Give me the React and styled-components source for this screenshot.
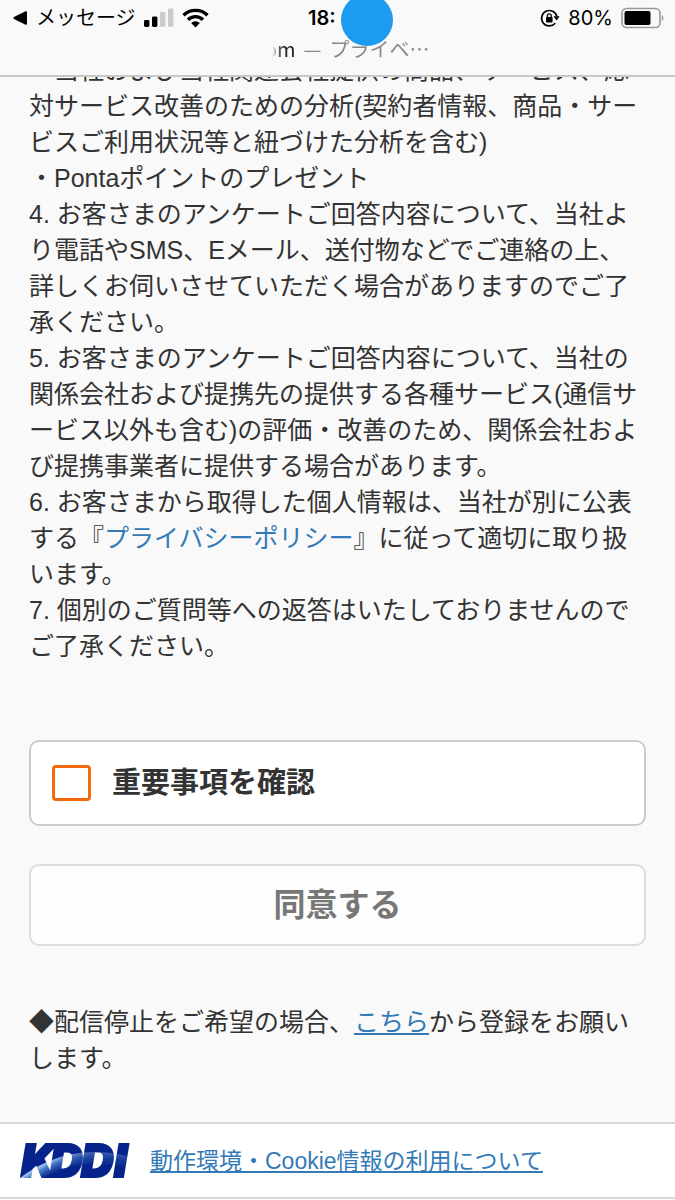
import styled, { createGlobalStyle } from "styled-components";

const GlobalStyle = createGlobalStyle`
  * {
    box-sizing: border-box;
  }

  body {
    margin: 0;
    background: #f9f9f9;
    color: #333;
    font-family: "Liberation Sans", "Noto Sans CJK JP", sans-serif;
    font-size: 25px;
    line-height: 36px;
  }
`;

// Browser chrome

const Header = styled.header`
  position: sticky;
  top: 0;
  z-index: 1;
  height: 77px;
  background: #f9f9f9;
  border-bottom: 2px solid #c8c8c8;
  font-family: Inter, "Noto Sans CJK JP", sans-serif;
  font-size: 20px;
`;

const StatusBar = styled.div`
  display: grid;
  grid-template-columns: 1fr auto 1fr;
  padding: 0 11px 0 12px;
  color: #000;
`;

const StatusGroup = styled.div`
  display: flex;
  align-items: center;
  justify-content: ${(props) => (props.$end ? "flex-end" : "flex-start")};
  gap: 8px;
`;

const BackLink = styled.a`
  display: flex;
  align-items: center;
  gap: 8px;
  color: inherit;
  text-decoration: none;
`;

const Clock = styled.div`
  position: relative;
  width: 60px;
  font-weight: 600;
`;

const Dot = styled.span`
  position: absolute;
  top: -6px;
  left: 33px;
  z-index: 1;
  width: 52px;
  height: 52px;
  border-radius: 50%;
  background: #1d9bf0;
`;

const AddressRow = styled.div`
  display: flex;
  justify-content: center;
  padding-left: 24px;
`;

const AddressBar = styled.div`
  display: flex;
  justify-content: flex-end;
  gap: 8px;
  width: 160px;
  color: #888;
  font-family: "Noto Sans CJK JP", sans-serif;
  line-height: 26px;
  white-space: nowrap;
  mask-image: linear-gradient(to right, transparent 2px, #000 12px);
`;

const Host = styled.span`
  color: #222;
`;

// Page

const Main = styled.main`
  margin-top: -25px;
  padding: 0 29px 46px;
`;

const Paragraph = styled.p`
  margin: 0;
  line-break: normal;
`;

const Link = styled.a`
  color: #337ab7;
  text-decoration: ${(props) => (props.$plain ? "none" : "underline")};
  text-decoration-thickness: 2px;
  text-decoration-skip-ink: none;
  text-underline-offset: 2px;
`;

const ConfirmBox = styled.label`
  display: flex;
  align-items: center;
  gap: 21px;
  height: 86px;
  margin-top: 76px;
  padding: 0 21px;
  background: #fff;
  border: 2px solid #ccc;
  border-radius: 10px;
  font-size: 29px;
  font-weight: 700;
`;

const Checkbox = styled.input`
  appearance: none;
  width: 39px;
  height: 36px;
  margin: 0;
  background: #fff;
  border: 3px solid #f26a0c;
  border-radius: 4px;

  &:checked {
    background: #f26a0c;
  }
`;

const SubmitButton = styled.button`
  display: block;
  width: 100%;
  height: 82px;
  margin: 38px 0 58px;
  background: #fdfdfd;
  border: 2px solid #ddd;
  border-radius: 10px;
  color: #777;
  font: inherit;
  font-size: 32px;
  font-weight: 700;
`;

const Footer = styled.footer`
  display: flex;
  align-items: center;
  gap: 20px;
  height: 77px;
  padding: 0 20px;
  background: #fff;
  border-top: 2px solid #d8d8d8;
  border-bottom: 2px solid #d8d8d8;
  font-size: 23px;
`;

const BackIcon = () => (
  <svg width="16" height="16" viewBox="0 0 16 16" aria-hidden="true">
    <path
      d="M14 2.2v11.6L2.4 8z"
      stroke="#000"
      strokeWidth="2"
      strokeLinejoin="round"
    />
  </svg>
);

const SignalIcon = () => (
  <svg width="30" height="20" viewBox="0 0 30 20" aria-hidden="true">
    <rect x="0" y="12" width="5.4" height="7" rx="1.4" />
    <rect x="8" y="8.5" width="5.4" height="10.5" rx="1.4" />
    <rect x="16" y="4" width="5.4" height="15" rx="1.4" fill="#ccc" />
    <rect x="24" y="0.5" width="5.4" height="18.5" rx="1.4" fill="#ccc" />
  </svg>
);

const WifiIcon = () => (
  <svg width="27" height="20" viewBox="0 0 27 20" aria-hidden="true">
    <g fill="none" stroke="#000" strokeWidth="3.4">
      <path d="M1.5 7.3a17 17 0 0 1 24 0" />
      <path d="M6 11.7a10.7 10.7 0 0 1 15 0" />
    </g>
    <path d="M9.2 15.1a6.2 6.2 0 0 1 8.6 0L13.5 19.5z" />
  </svg>
);

const RotationLockIcon = () => (
  <svg width="20" height="20" viewBox="0 0 20 20" aria-hidden="true">
    <path
      d="M15.2 15.2A7.7 7.7 0 1 1 16.8 8.4"
      fill="none"
      stroke="#000"
      strokeWidth="1.7"
    />
    <path d="M13.4 8.2h6.2l-3 4.2z" />
    <rect x="6" y="9" width="6.6" height="5.4" rx="0.8" />
    <path
      d="M7.4 9.5V7.8a1.9 1.9 0 0 1 3.8 0v1.7"
      fill="none"
      stroke="#000"
      strokeWidth="1.3"
    />
  </svg>
);

const BatteryIcon = () => (
  <svg width="43" height="22" viewBox="0 0 43 22" aria-hidden="true">
    <rect
      x="1"
      y="1.5"
      width="38"
      height="19"
      rx="4.5"
      fill="none"
      stroke="#999"
      strokeWidth="1.6"
    />
    <rect x="3.5" y="4" width="26" height="14" rx="2" />
    <path d="M40.8 8v6c2-.8 2-5.2 0-6z" fill="#999" />
  </svg>
);

const Logo = () => (
  <svg width="110" height="38" viewBox="0 0 110 38" role="img" aria-label="KDDI">
    <defs>
      <radialGradient
        id="horizon"
        gradientUnits="userSpaceOnUse"
        cx="75"
        cy="131"
        r="121"
      >
        <stop offset="0.89" stopColor="#05238a" />
        <stop offset="0.96" stopColor="#4a82cb" />
        <stop offset="1" stopColor="#b4d4f4" />
      </radialGradient>
      <linearGradient id="dusk" x1="0" y1="0" x2="1" y2="0">
        <stop offset="0.2" stopColor="#05238a" stopOpacity="0" />
        <stop offset="0.6" stopColor="#05238a" stopOpacity="0.6" />
        <stop offset="1" stopColor="#05238a" stopOpacity="0.8" />
      </linearGradient>
      <mask
        id="letters"
        maskUnits="userSpaceOnUse"
        x="0"
        y="0"
        width="110"
        height="38"
      >
        <text
          x="1 30 61 94"
          y="35"
          fill="#fff"
          stroke="#fff"
          strokeWidth="2"
          fontFamily="Inter, sans-serif"
          fontSize="45"
          fontWeight="900"
          fontStyle="italic"
        >
          KDDI
        </text>
      </mask>
    </defs>
    <g mask="url(#letters)">
      <rect width="110" height="38" fill="#05238a" />
      <circle cx="75" cy="131" r="121" fill="url(#horizon)" />
      <rect width="110" height="38" fill="url(#dusk)" />
    </g>
  </svg>
);

const App = () => (
  <div lang="ja">
    <GlobalStyle />
    <Header>
      <StatusBar>
        <StatusGroup>
          <BackLink href="#back">
            <BackIcon />
            メッセージ
          </BackLink>
          <SignalIcon />
          <WifiIcon />
        </StatusGroup>
        <Clock>
          18:
          <Dot />
        </Clock>
        <StatusGroup $end>
          <RotationLockIcon />
          80%
          <BatteryIcon />
        </StatusGroup>
      </StatusBar>
      <AddressRow>
        <AddressBar>
          <Host>om</Host>
          <span>—</span>
          <span>プライベ…</span>
        </AddressBar>
      </AddressRow>
    </Header>

    <Main>
      <Paragraph>・当社および当社関連会社提供の商品、サービス、応対サービス改善のための分析(契約者情報、商品・サービスご利用状況等と紐づけた分析を含む)</Paragraph>
      <Paragraph>・Pontaポイントのプレゼント</Paragraph>
      <Paragraph>4. お客さまのアンケートご回答内容について、当社より電話やSMS、Eメール、送付物などでご連絡の上、詳しくお伺いさせていただく場合がありますのでご了承ください。</Paragraph>
      <Paragraph>5. お客さまのアンケートご回答内容について、当社の関係会社および提携先の提供する各種サービス(通信サービス以外も含む)の評価・改善のため、関係会社および提携事業者に提供する場合があります。</Paragraph>
      <Paragraph>
        6. お客さまから取得した個人情報は、当社が別に公表する『
        <Link href="#privacy" $plain>プライバシーポリシー</Link>
        』に従って適切に取り扱います。
      </Paragraph>
      <Paragraph>7. 個別のご質問等への返答はいたしておりませんのでご了承ください。</Paragraph>

      <ConfirmBox>
        <Checkbox type="checkbox" />
        重要事項を確認
      </ConfirmBox>
      <SubmitButton type="button">同意する</SubmitButton>

      <Paragraph>
        ◆配信停止をご希望の場合、<Link href="#unsubscribe">こちら</Link>
        から登録をお願いします。
      </Paragraph>
    </Main>

    <Footer>
      <Logo />
      <Link href="#cookie">動作環境・Cookie情報の利用について</Link>
    </Footer>
  </div>
);

export default App;
